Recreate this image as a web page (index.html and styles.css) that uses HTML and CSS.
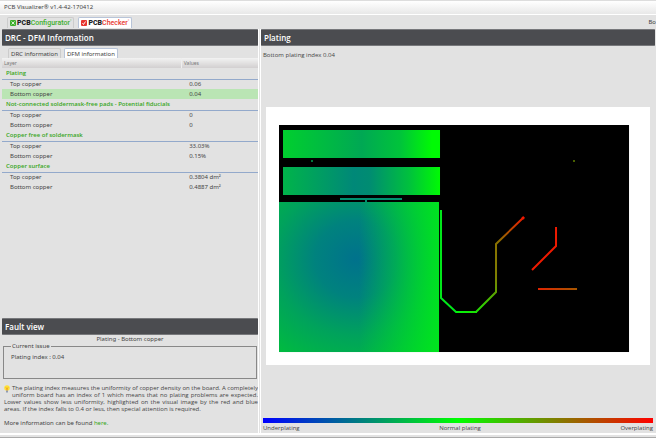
FILE: index.html
```html
<!DOCTYPE html>
<html lang="en">
<head>
    <meta charset="UTF-8">
    <meta name="viewport" content="width=device-width, initial-scale=1.0">
    <title>PCB Visualizer</title>
    <link rel="stylesheet" href="styles.css">
</head>
<body>
    <header class="titlebar">PCB Visualizer® v1.4-42-170412</header>

    <nav class="apps">
        <button type="button" class="app configurator">
            <svg viewBox="0 0 12 12"><rect width="12" height="12" rx="2" fill="#3dae2b"/><path d="M3 3l6 6M9 3l-6 6" fill="none" stroke="#fff" stroke-width="1.6"/></svg>
            <span><b>PCB</b>Configurator<sup>°</sup></span>
        </button>
        <button type="button" class="app checker active">
            <svg viewBox="0 0 12 12"><rect width="12" height="12" rx="2" fill="#e8352e"/><path d="M3 6l2 3 4-6" fill="none" stroke="#fff" stroke-width="1.8"/></svg>
            <span><b>PCB</b>Checker<sup>°</sup></span>
        </button>
        <span class="side">Bo</span>
    </nav>

    <main>
        <section class="left">
            <h2>DRC - DFM Information</h2>
            <div class="tabs">
                <button type="button">DRC information</button>
                <button type="button" class="active">DFM information</button>
            </div>
            <table>
                <thead>
                    <tr><th>Layer</th><th>Values</th></tr>
                </thead>
                <tbody>
                    <tr class="group"><td colspan="2">Plating</td></tr>
                    <tr><td>Top copper</td><td>0.06</td></tr>
                    <tr class="selected"><td>Bottom copper</td><td>0.04</td></tr>
                    <tr class="group"><td colspan="2">Not-connected soldermask-free pads - Potential fiducials</td></tr>
                    <tr><td>Top copper</td><td>0</td></tr>
                    <tr><td>Bottom copper</td><td>0</td></tr>
                    <tr class="group"><td colspan="2">Copper free of soldermask</td></tr>
                    <tr><td>Top copper</td><td>33.03%</td></tr>
                    <tr><td>Bottom copper</td><td>0.15%</td></tr>
                    <tr class="group"><td colspan="2">Copper surface</td></tr>
                    <tr><td>Top copper</td><td>0.3804 dm²</td></tr>
                    <tr><td>Bottom copper</td><td>0.4887 dm²</td></tr>
                </tbody>
            </table>

            <div class="fault">
                <h2>Fault view</h2>
                <p class="name">Plating - Bottom copper</p>
                <fieldset>
                    <legend>Current issue</legend>
                    Plating index : 0.04
                </fieldset>
                <p class="hint">
                    <svg viewBox="0 0 12 16"><circle cx="6" cy="6" r="5.5" fill="#ffe135"/><path d="M4 11h4v4H4z" fill="#8f9bb3"/><path d="M4 5l2 2 2-2M6 7v4" fill="none" stroke="#e0701c" stroke-width="1.5"/></svg>
                    The plating index measures the uniformity of copper density on the board. A completely uniform board has an index of 1 which means that no plating problems are expected. Lower values show less uniformity, highlighted on the visual image by the red and blue areas. If the index falls to 0.4 or less, then special attention is required.
                </p>
                <p class="more">More information can be found <a href="#">here.</a></p>
            </div>
        </section>

        <div class="splitter"></div>

        <section class="right">
            <h2>Plating</h2>
            <p class="index">Bottom plating index 0.04</p>
            <div class="board">
                <svg viewBox="0 0 384 257">
                    <defs>
                        <linearGradient id="top"><stop offset="0" stop-color="#00cf2e"/><stop offset=".5" stop-color="#00a854"/><stop offset=".75" stop-color="#00c43a"/><stop offset=".95" stop-color="#00fa04"/></linearGradient>
                        <linearGradient id="second"><stop offset="0" stop-color="#00b44a"/><stop offset=".45" stop-color="#008878"/><stop offset=".55" stop-color="#008c72"/><stop offset=".8" stop-color="#00c03e"/><stop offset="1" stop-color="#00fa04"/></linearGradient>
                        <radialGradient id="main" cx=".48" cy=".38" r=".85"><stop offset="0" stop-color="#00728c"/><stop offset=".3" stop-color="#00827e"/><stop offset=".6" stop-color="#00a25c"/><stop offset="1" stop-color="#00c238"/></radialGradient>
                        <linearGradient id="edge"><stop offset=".5" stop-color="#00ec18" stop-opacity="0"/><stop offset="1" stop-color="#00ec18" stop-opacity=".85"/></linearGradient>
                        <linearGradient id="trace" gradientUnits="userSpaceOnUse" x1="190" y1="205" x2="258" y2="110"><stop offset="0" stop-color="#00f808"/><stop offset=".2" stop-color="#38c800"/><stop offset=".45" stop-color="#808000"/><stop offset=".7" stop-color="#8a7000"/><stop offset="1" stop-color="#f01800"/></linearGradient>
                        <linearGradient id="dash"><stop offset="0" stop-color="#e02400"/><stop offset="1" stop-color="#a85800"/></linearGradient>
                    </defs>
                    <rect x="13" y="18" width="350" height="227"/>
                    <rect x="17" y="23" width="157" height="28" fill="url(#top)"/>
                    <rect x="17" y="60" width="157" height="28" fill="url(#second)"/>
                    <rect x="13" y="95" width="160" height="150" fill="url(#main)"/>
                    <rect x="13" y="95" width="160" height="150" fill="url(#edge)"/>
                    <path d="M74 92h62M100 93v2" fill="none" stroke="#009070" stroke-width="2"/>
                    <circle cx="46" cy="54" r="1" fill="#00a050"/>
                    <circle cx="308" cy="54" r="1" fill="#608000"/>
                    <g fill="none" stroke-width="2">
                        <path d="M175 103v88l15 14h21" stroke="#00e81a"/>
                        <path d="M190 205h20l20-20v-48l28-27" stroke="url(#trace)"/>
                        <path d="M290 120v19l-24 24" stroke="#ee1a00"/>
                    </g>
                    <rect x="272" y="181" width="39" height="2" fill="url(#dash)"/>
                    <circle cx="257" cy="111" r="1.5" fill="#f01800"/>
                </svg>
            </div>
            <div class="scale">
                <div class="bar"></div>
                <div class="labels"><span>Underplating</span><span>Normal plating</span><span>Overplating</span></div>
            </div>
        </section>
    </main>
</body>
</html>
```
FILE: styles.css
```css
* {
    margin: 0;
    padding: 0;
    box-sizing: border-box;
}

body {
    display: flex;
    flex-direction: column;
    min-height: 100vh;
    background: #e2e2e2;
    color: #444;
    font-family: "Noto Sans", sans-serif;
    font-size: 6px;
    line-height: 7px;
    border-top: 1px solid #ddd;
    border-bottom: 1px solid #aaa;
}

button {
    font: inherit;
    color: inherit;
    background: none;
    border: 1px solid #ccc;
    border-bottom: none;
    border-radius: 2px 2px 0 0;
}

.titlebar {
    height: 14px;
    padding-left: 4px;
    line-height: 12px;
    background: linear-gradient(#fff, #e8e8e8);
    border-bottom: 1px solid #fff;
}

.apps {
    display: flex;
    align-items: flex-end;
    gap: 4px;
    height: 13px;
    padding-left: 7px;
}

.app {
    display: flex;
    align-items: center;
    gap: 1px;
    height: 11px;
    padding: 0 2px;
    font-family: Roboto, sans-serif;
    font-size: 7px;
    line-height: 8px;
    font-weight: 500;
    white-space: nowrap;
}

.app svg {
    width: 6px;
    height: 6px;
}

.app b {
    color: #222;
    font-weight: 900;
}

.app sup {
    font-size: 4px;
    line-height: 0;
}

.configurator {
    color: #3dae2b;
}

.checker {
    color: #e8352e;
}

.app.active {
    background: #fff;
    border-color: #b8c4d8;
}

.side {
    margin-left: auto;
    line-height: 12px;
}

main {
    display: flex;
    flex: 1;
    padding: 1px 1px 0 2px;
    border-bottom: 2px solid #fff;
    margin-bottom: 2px;
}

h2 {
    height: 17px;
    padding-left: 3px;
    background: #4b4c50;
    border: 1px solid #77787b;
    border-width: 1px 0;
    border-radius: 1px;
    color: #fff;
    font-family: "Open Sans", sans-serif;
    font-size: 8px;
    font-weight: 600;
    line-height: 15px;
}

.left {
    display: flex;
    flex-direction: column;
    width: 39.2%;
}

.tabs {
    display: flex;
    gap: 3px;
    padding: 2px 0 0 6px;
}

.tabs button {
    height: 10px;
    padding: 0 2px;
    line-height: 10px;
}

.tabs .active {
    background: #fff;
    border-color: #b8c4d8;
}

table {
    width: 100%;
    table-layout: fixed;
    border-collapse: collapse;
}

th {
    height: 10px;
    padding-left: 2px;
    background: linear-gradient(#f2f2f2, #d2cfd0);
    color: #777;
    font-size: 5px;
    font-weight: normal;
    text-align: left;
}

th:first-child {
    width: 70%;
}

th + th {
    border-left: 1px solid #eee;
}

td {
    height: 10px;
    padding-left: 8px;
}

.group td {
    height: 11px;
    padding-left: 4px;
    color: #37a61b;
    font-family: "Open Sans", sans-serif;
    font-weight: 600;
    border-bottom: 1px solid #93a9cb;
}

.selected {
    background: #bae5b4;
}

.fault {
    margin-top: auto;
}

.name {
    padding-top: 1px;
    text-align: center;
}

fieldset {
    height: 36px;
    margin: 0 1px;
    padding: 4px 7px;
    border: 1px solid #888;
}

legend {
    padding: 0 1px;
}

.hint {
    margin-top: 6px;
    padding-left: 2px;
    font-family: "Open Sans", sans-serif;
    text-align: justify;
}

.hint svg {
    float: left;
    width: 6px;
    height: 8px;
    margin-right: 2px;
}

.more {
    padding: 7px 2px 6px;
}

.more a {
    color: #37a61b;
    text-decoration: none;
}

.splitter {
    width: 3px;
    border: 1px solid #fff;
    border-width: 0 1px;
}

.right {
    display: flex;
    flex: 1;
    flex-direction: column;
    font-family: "Open Sans", sans-serif;
}

.index {
    padding: 6px 2px 5px;
}

.board {
    display: flex;
    flex: 1;
    align-items: center;
    padding: 0 5px 10px;
}

.board svg {
    width: 100%;
    background: #fff;
}

.scale {
    padding: 0 2px 1px;
}

.bar {
    height: 5px;
    background: linear-gradient(to right, #00f, #0f0 50%, #f00);
}

.labels {
    display: flex;
    justify-content: space-between;
    padding: 2px 0 0;
}
```
